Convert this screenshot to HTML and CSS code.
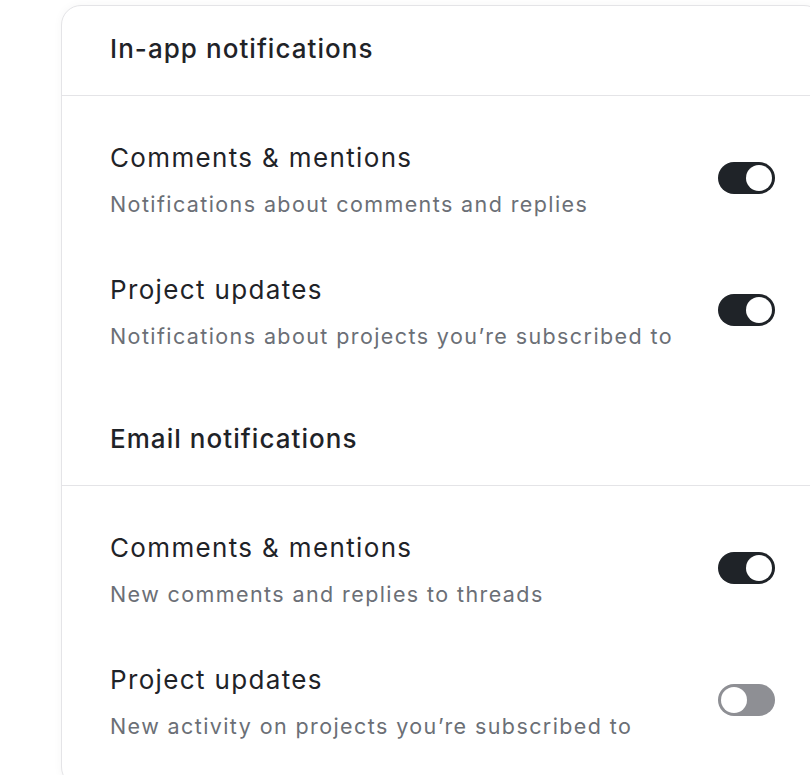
FILE: index.html
```html
<!DOCTYPE html>
<html lang="en">
    <head>
        <meta charset="UTF-8">
        <meta name="viewport" content="width=device-width, initial-scale=1.0">
        <title>Notification settings</title>
        <link rel="stylesheet" href="styles.css">
    </head>
    <body>

        <div class="card">
            <div class="section-head">In-app notifications</div>
            <div class="setting-list">
                <div class="setting">
                    <div class="setting-text">
                        <div class="setting-title">Comments &amp; mentions</div>
                        <div class="setting-desc">Notifications about comments and replies</div>
                    </div>
                    <span class="toggle on"></span>
                </div>
                <div class="setting">
                    <div class="setting-text">
                        <div class="setting-title">Project updates</div>
                        <div class="setting-desc">Notifications about projects you’re subscribed to</div>
                    </div>
                    <span class="toggle on"></span>
                </div>
            </div>

            <div class="section-head">Email notifications</div>
            <div class="setting-list">
                <div class="setting">
                    <div class="setting-text">
                        <div class="setting-title">Comments &amp; mentions</div>
                        <div class="setting-desc">New comments and replies to threads</div>
                    </div>
                    <span class="toggle on"></span>
                </div>
                <div class="setting">
                    <div class="setting-text">
                        <div class="setting-title">Project updates</div>
                        <div class="setting-desc">New activity on projects you’re subscribed to</div>
                    </div>
                    <span class="toggle"></span>
                </div>
            </div>
        </div>

    </body>
</html>
```

FILE: styles.css
```css
/* ajustes de notificaciones */
body {
    margin: 0;
    padding: 5px 0 0 61px;
    background-color: #ffffff;
    font-family: Inter, "Noto Sans", sans-serif;
    color: #1f2328;
    overflow: hidden;
}
.card {
    width: 763px;
    box-sizing: border-box;
    background-color: #ffffff;
    border: 1px solid #e4e4e7;
    border-radius: 20px;
    box-shadow: 0 0 10px rgba(0, 0, 0, 0.04);
}
.section-head {
    padding: 27px 48px 30px;
    font-size: 26px;
    line-height: 32px;
    font-weight: 500;
    letter-spacing: 1.05px;
    border-bottom: 1px solid #e4e4e7;
}
.setting-list {
    padding: 18px 0;
}
.setting {
    display: flex;
    align-items: center;
    justify-content: space-between;
    padding: 26px 48px;
}
.setting-title {
    font-size: 26px;
    line-height: 36px;
    letter-spacing: 1.35px;
}
.setting-desc {
    margin-top: 12px;
    font-size: 21.5px;
    line-height: 32px;
    letter-spacing: 1.4px;
    color: #6b6f76;
}
.toggle {
    position: relative;
    display: block;
    width: 57px;
    height: 32px;
    margin-bottom: 4px;
    border-radius: 16px;
    background-color: #8e8f94;
    flex-shrink: 0;
}
.toggle::after {
    content: "";
    position: absolute;
    top: 3px;
    left: 3px;
    width: 26px;
    height: 26px;
    border-radius: 50%;
    background-color: #ffffff;
}
.toggle.on {
    background-color: #1f2328;
}
.toggle.on::after {
    left: 28px;
}
```
